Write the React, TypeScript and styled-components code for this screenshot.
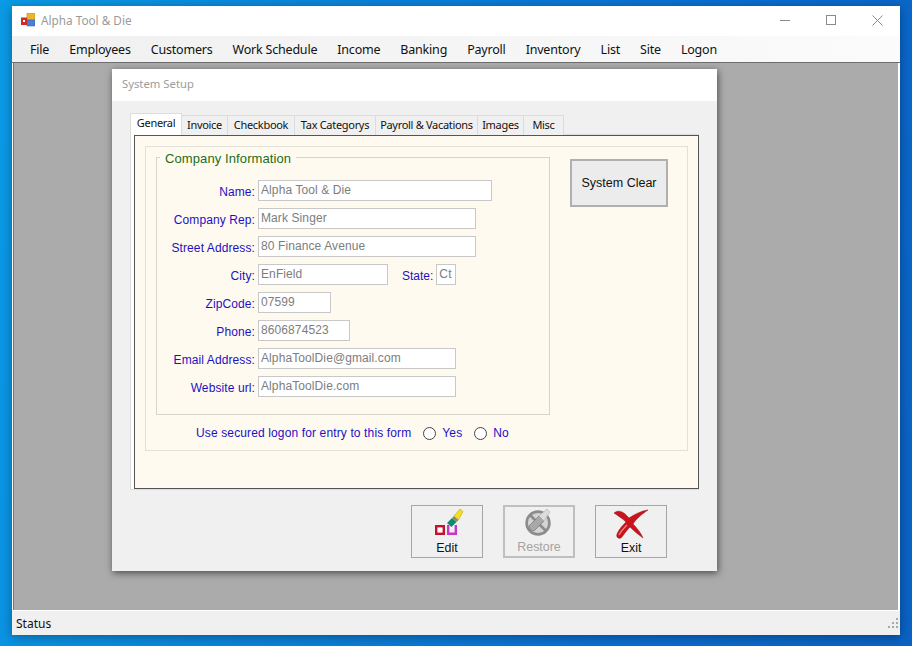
import React from "react";
import styled, { createGlobalStyle } from "styled-components";

const Global = createGlobalStyle`
  html, body { margin: 0; padding: 0; width: 912px; height: 646px; overflow: hidden; }
  body { font-family: "Liberation Sans", Arial, sans-serif; }
`;

const Desktop = styled.div`
  width: 912px; height: 646px; box-sizing: border-box;
  padding: 6px 12px 11px;
  background: linear-gradient(100deg, #0a9be6 0%, #0b86dc 30%, #0a6fd0 70%, #0a62c4 100%);
`;
const Win = styled.div`
  width: 888px; height: 629px; display: flex; flex-direction: column;
  background: #fff; box-shadow: 0 2px 10px rgba(0,0,0,.35);
`;
const TitleBar = styled.div`
  height: 30px; flex: none; box-sizing: border-box; display: flex; align-items: center; padding: 0 0 2px 9px;
  background: #fff; color: #9a9a9a;
  font: 11.75px "Noto Sans", "Open Sans", sans-serif;
`;
const TitleText = styled.span` margin-left: 6px; flex: 1; `;
const Caption = styled.div`
  width: 46px; height: 28px; display: flex; align-items: center; justify-content: center;
`;
const MenuBar = styled.div`
  height: 25px; flex: none; display: flex; align-items: center; padding: 1px 0 0 8px;
  background: linear-gradient(90deg, #f0f0f0 0%, #f6f6f6 60%, #fbfbfb 100%);
  border-bottom: 1px solid #6e6e6e; box-sizing: content-box;
`;
const MenuItem = styled.span`
  padding: 0 10px; color: #111;
  font: 12.5px "Noto Sans", "Open Sans", sans-serif; letter-spacing: -0.2px;
`;
const Mdi = styled.div`
  flex: 1; min-height: 0; box-sizing: border-box; margin: 0 2px 0 1px;
  padding: 6px 0 0 98px;
  background: #ababab;
  border-left: 1px solid #777;
`;
const StatusBar = styled.div`
  height: 24px; flex: none; display: flex; align-items: center; justify-content: space-between;
  padding: 0 1px 0 4px; background: #f0f0f0; border-top: 1px solid #fff;
  color: #111; font: 12px "Noto Sans", "Open Sans", sans-serif;
`;
const Dialog = styled.div`
  width: 605px; height: 502px; display: flex; flex-direction: column;
  background: #f0f0f0; box-shadow: 1px 2px 7px rgba(0,0,0,.55);
`;
const DialogTitle = styled.div`
  height: 32px; flex: none; box-sizing: border-box; padding: 7px 0 0 10px;
  background: #fff; color: #9c9c9c;
  font: 11.3px "Noto Sans", "Open Sans", sans-serif;
`;
const DialogBody = styled.div`
  flex: 1; padding: 12px 0 0 18px;
`;
const Tabs = styled.div`
  display: flex; align-items: flex-end; height: 22px;
`;
const Tab = styled.div<{ $active?: boolean; $w: number }>`
  width: ${(p) => p.$w}px;
  height: ${(p) => (p.$active ? 22 : 20)}px; box-sizing: border-box;
  padding-top: 1px; text-align: center;
  background: ${(p) => (p.$active ? "#fff" : "#f0f0f0")};
  border: 1px solid #dcdcdc;
  border-bottom: none;
  margin-left: ${(p) => (p.$active ? 0 : -1)}px;
  color: #111; font: 11px/15px "Noto Sans", "Open Sans", sans-serif;
  letter-spacing: -0.3px; white-space: nowrap;
`;
const TabFrame = styled.div`
  width: 569px; height: 356px; box-sizing: border-box; padding: 0 0 0 3px;
  background: #fff; border: 1px solid #dcdcdc; margin-top: -1px;
`;
const TabPage = styled.div`
  width: 565px; height: 354px; box-sizing: border-box;
  background: #fffaf0; border: 1px solid #555; padding: 10px 0 0 10px;
`;
const Outer = styled.div`
  width: 543px; height: 305px; box-sizing: border-box; padding: 10px 0 0 10px;
  border: 1px solid #e3e0d8; display: grid; grid-template-columns: 395px 1fr;
  grid-template-rows: 258px 1fr;
`;
const Group = styled.div`
  box-sizing: border-box; width: 394px; height: 258px;
  border: 1px solid #d6d4cd; position: relative;
`;
const Legend = styled.div`
  position: absolute; left: 3px; top: -6px; padding: 0 5px; background: #fffaf0;
  color: #1a6e1a; font: 13px/14px "Liberation Sans", sans-serif; letter-spacing: .1px;
`;
const Rows = styled.div`
  padding-top: 22px; display: flex; flex-direction: column; gap: 8px;
`;
const Row = styled.div`
  display: flex; align-items: flex-start; height: 20px;
`;
const FieldLabel = styled.label`
  width: 98px; text-align: right; color: #1d10c4; font-size: 12px; line-height: 14px;
  letter-spacing: .1px; padding-top: 5px; flex: none; white-space: nowrap;
`;
const Field = styled.div<{ $w: number }>`
  margin-left: 3px; width: ${(p) => p.$w}px; height: 21px; box-sizing: border-box; flex: none;
  background: #fff; border: 1px solid #c8c8c8; color: #7d7d7d;
  font-size: 12px; line-height: 16px; letter-spacing: .1px; padding: 1px 0 0 2px; overflow: hidden; white-space: nowrap;
`;
const StateLabel = styled(FieldLabel)` width: auto; margin-left: 14px; letter-spacing: 0; `;
const BigButton = styled.button`
  align-self: start; margin: 2px 0 0 19px; width: 98px; height: 48px; box-sizing: border-box;
  background: #ececec; border: 2px solid #b0b0b0;
  color: #111; font: 12.5px "Liberation Sans", sans-serif; padding: 0 0 1px;
`;
const Secure = styled.div`
  grid-column: 1 / 3; display: flex; align-items: center; height: 18px;
  padding: 9px 0 0 40px; color: #1d10c4; font-size: 12px; letter-spacing: .13px;
`;
const Radio = styled.span`
  width: 11px; height: 11px; border: 1px solid #444; border-radius: 50%; background: #fff;
  margin-left: 12px; margin-right: 6px; flex: none;
`;
const Actions = styled.div`
  display: flex; gap: 20px; padding: 15px 0 0 281px;
`;
const ActionButton = styled.button<{ $disabled?: boolean }>`
  width: 72px; height: 53px; box-sizing: border-box;
  padding: ${(p) => (p.$disabled ? "1px" : "2px")} 0 0;
  display: flex; flex-direction: column; align-items: center;
  background: #f0f0f0;
  border: ${(p) => (p.$disabled ? "2px solid #bfbfbf" : "1px solid #a6a6a6")};
  color: ${(p) => (p.$disabled ? "#a3a3a3" : "#111")};
  font: 12.4px/14px "Liberation Sans", sans-serif;
  svg { margin-bottom: ${(p) => (p.$disabled ? 0 : 1)}px; }
`;
const Ico = styled.svg` display: block; flex: none; `;

const menus = ["File","Employees","Customers","Work Schedule","Income","Banking","Payroll","Inventory","List","Site","Logon"];
const tabs: [string, number][] = [["Invoice",47],["Checkbook",68],["Tax Categorys",82],["Payroll & Vacations",103],["Images",47],["Misc",41]];
const fields: [string, string, number][] = [
  ["Name:", "Alpha Tool & Die", 234],
  ["Company Rep:", "Mark Singer", 218],
  ["Street Address:", "80 Finance Avenue", 218],
];
const fields2: [string, string, number][] = [
  ["ZipCode:", "07599", 73],
  ["Phone:", "8606874523", 92],
  ["Email Address:", "AlphaToolDie@gmail.com", 198],
  ["Website url:", "AlphaToolDie.com", 198],
];

const AppIcon = () => (
  <Ico width="14" height="14" viewBox="0 0 14 14">
    <rect x="6" y="0" width="8" height="7" fill="#eeb52c" stroke="#b98c1c" strokeWidth=".6" />
    <rect x="6" y="7" width="8" height="6" fill="#4a80d8" stroke="#2c5aa8" strokeWidth=".5" />
    <rect x="0" y="4.5" width="6" height="7.5" fill="#d02c20" />
    <rect x="2" y="7" width="2" height="2" fill="#fff" />
  </Ico>
);
const EditIcon = () => (
  <Ico width="36" height="32" viewBox="0 0 36 32">
    <rect x="7.2" y="18.2" width="7.6" height="7.6" fill="#fff" stroke="#c8102e" strokeWidth="2.4" />
    <path d="M19.2 17v8.8h7.6V17" fill="none" stroke="#cc33cc" strokeWidth="2.4" />
    <path d="M18 15l5-5 4.5 4-5 5z" fill="#0c8a6e" />
    <path d="M23 10l2-2 4.5 4-2 2z" fill="#8a8a6a" />
    <path d="M25 8l6-7 3 2.5-4.5 8.5z" fill="#f2e020" stroke="#a89a10" strokeWidth=".5" />
  </Ico>
);
const RestoreIcon = () => (
  <Ico width="36" height="32" viewBox="0 0 36 32">
    <circle cx="17" cy="15" r="11.4" fill="#d4d4d4" stroke="#8c8c8c" strokeWidth="2.6" />
    <path d="M9 7l16 16" stroke="#8c8c8c" strokeWidth="2.6" />
    <path d="M8 18l10-10 5 5-10 10-4-1z" fill="#a8a8a8" stroke="#777" strokeWidth=".7" />
    <path d="M18 8l8-7 3 3-6 9z" fill="#dcdcdc" stroke="#b0b0b0" strokeWidth=".6" />
  </Ico>
);
const ExitIcon = () => (
  <Ico width="36" height="32" viewBox="0 0 36 32">
    <path d="M1 5C6 1 11 4 16 10 22 6 28 3 35 2 29 6 23 11 20 16 24 20 28 25 30 30 26 27 21 23 17 19 13 23 10 28 8 30 5 31 3 29 4 26 6 21 10 17 13 14 9 10 5 8 1 5Z" fill="#c8141c" stroke="#960e14" strokeWidth=".5" />
    <path d="M6 27c2-4 5-7 8-10" stroke="#ee8a8a" strokeWidth="1.2" fill="none" />
  </Ico>
);
const Grip = () => (
  <Ico width="12" height="12" viewBox="0 0 12 12" fill="#a8a8a8">
    <rect x="9" y="1" width="2" height="2" /><rect x="5" y="5" width="2" height="2" /><rect x="9" y="5" width="2" height="2" />
    <rect x="1" y="9" width="2" height="2" /><rect x="5" y="9" width="2" height="2" /><rect x="9" y="9" width="2" height="2" />
  </Ico>
);

const FieldRow = ({ f }: { f: [string, string, number] }) => (
  <Row><FieldLabel>{f[0]}</FieldLabel><Field $w={f[2]}>{f[1]}</Field></Row>
);

export default function App() {
  return (
    <Desktop>
      <Global />
      <Win>
        <TitleBar>
          <AppIcon />
          <TitleText>Alpha Tool &amp; Die</TitleText>
          <Caption><Ico width="10" height="10" viewBox="0 0 10 10"><path d="M0 5.5h10" stroke="#8a8a8a" /></Ico></Caption>
          <Caption><Ico width="10" height="10" viewBox="0 0 10 10"><rect x=".5" y=".5" width="9" height="9" fill="none" stroke="#8a8a8a" /></Ico></Caption>
          <Caption><Ico width="11" height="11" viewBox="0 0 11 11"><path d="M.5.5l10 10M10.5.5l-10 10" stroke="#8a8a8a" /></Ico></Caption>
        </TitleBar>
        <MenuBar>{menus.map((m) => <MenuItem key={m}>{m}</MenuItem>)}</MenuBar>
        <Mdi>
          <Dialog>
            <DialogTitle>System Setup</DialogTitle>
            <DialogBody>
              <Tabs>
                <Tab $active $w={52}>General</Tab>
                {tabs.map(([t, w]) => <Tab key={t} $w={w}>{t}</Tab>)}
              </Tabs>
              <TabFrame>
                <TabPage>
                  <Outer>
                    <Group>
                      <Legend>Company Information</Legend>
                      <Rows>
                        {fields.map((f) => <FieldRow key={f[0]} f={f} />)}
                        <Row>
                          <FieldLabel>City:</FieldLabel>
                          <Field $w={130}>EnField</Field>
                          <StateLabel>State:</StateLabel>
                          <Field $w={20}>Ct</Field>
                        </Row>
                        {fields2.map((f) => <FieldRow key={f[0]} f={f} />)}
                      </Rows>
                    </Group>
                    <BigButton>System Clear</BigButton>
                    <Secure>
                      Use secured logon for entry to this form
                      <Radio />Yes
                      <Radio />No
                    </Secure>
                  </Outer>
                </TabPage>
              </TabFrame>
              <Actions>
                <ActionButton><EditIcon />Edit</ActionButton>
                <ActionButton $disabled><RestoreIcon />Restore</ActionButton>
                <ActionButton><ExitIcon />Exit</ActionButton>
              </Actions>
            </DialogBody>
          </Dialog>
        </Mdi>
        <StatusBar>Status<Grip /></StatusBar>
      </Win>
    </Desktop>
  );
}
